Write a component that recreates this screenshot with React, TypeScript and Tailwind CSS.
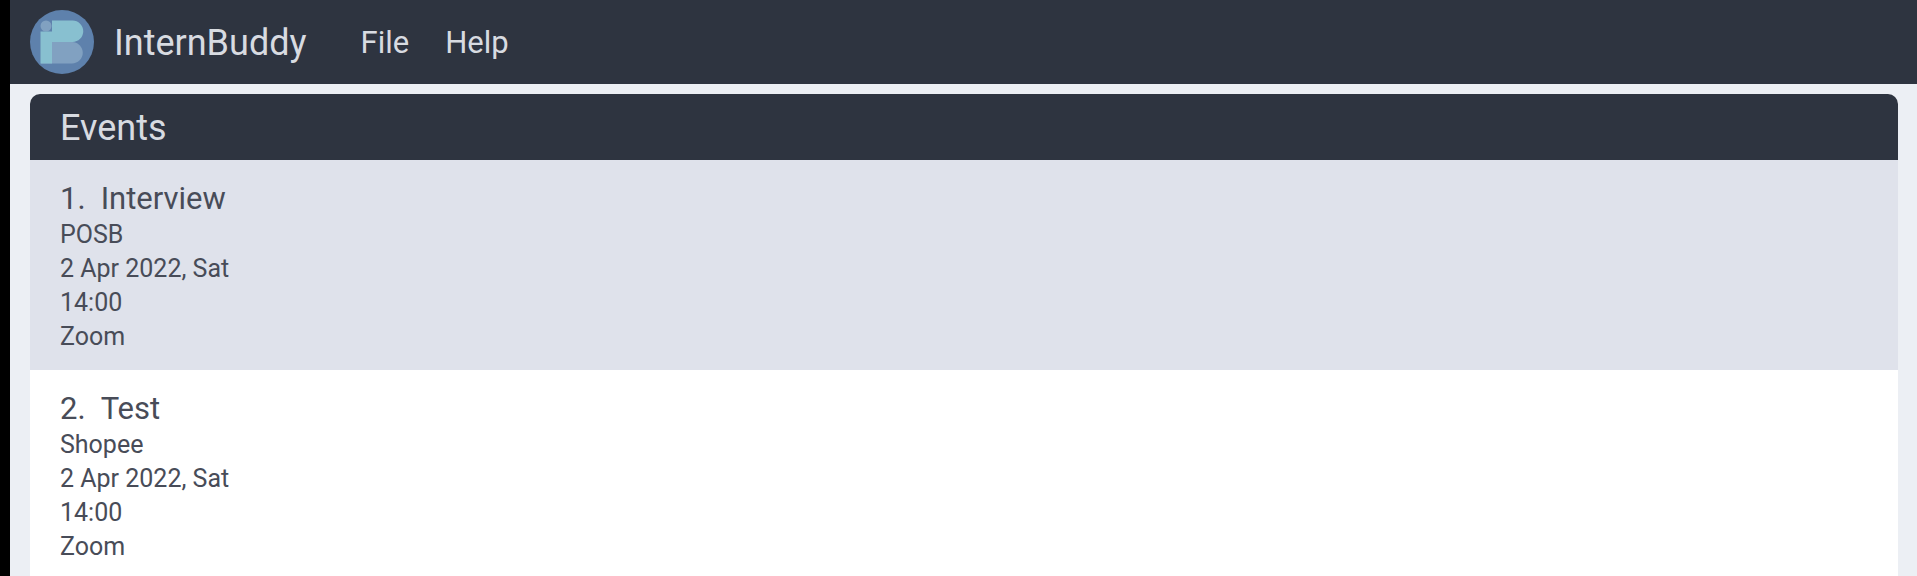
interface EventItem {
  title: string;
  company: string;
  date: string;
  time: string;
  place: string;
}

const events: EventItem[] = [
  { title: "Interview", company: "POSB", date: "2 Apr 2022, Sat", time: "14:00", place: "Zoom" },
  { title: "Test", company: "Shopee", date: "2 Apr 2022, Sat", time: "14:00", place: "Zoom" },
];

function Logo() {
  return (
    <svg viewBox="0 0 64 64" className="size-16 shrink-0" aria-hidden="true">
      <circle cx="32" cy="32" r="32" fill="#5e81ac" />
      <path d="M11 32H42A10.75 10.75 0 0 1 42 53.5H11Z" fill="#81a1c1" />
      <circle cx="16" cy="16" r="5.5" fill="#81a1c1" />
      <path d="M22 10.5H42.5A10.75 10.75 0 0 1 42.5 32H22V53.5H10.5V21.5H22Z" fill="#88c0d0" />
    </svg>
  );
}

function EventRow({ event, index }: { event: EventItem; index: number }) {
  return (
    <li className="px-[30px] pt-[19px] pb-4 text-[25px]/[34px] odd:bg-[#dfe2eb] even:bg-white">
      <h3 className="flex gap-[15px] text-[31px]/[39px]">
        <span>{index}.</span>
        <span>{event.title}</span>
      </h3>
      <p>{event.company}</p>
      <p>{event.date}</p>
      <p>{event.time}</p>
      <p>{event.place}</p>
    </li>
  );
}

export default function App() {
  return (
    <div className="flex h-screen flex-col overflow-hidden border-l-[10px] border-black bg-[#eceff4] font-['Roboto',sans-serif] text-[#484c58]">
      <header className="flex shrink-0 items-center bg-[#2e3440] px-5 py-[10px] text-[#d8dbe1]">
        <Logo />
        <h1 className="ml-5 pt-0.5 text-[36px]/[48px]">InternBuddy</h1>
        <nav className="ml-[54px] flex gap-9 pt-0.5 text-[31px]/[40px]">
          <button type="button">File</button>
          <button type="button">Help</button>
        </nav>
      </header>
      <main className="min-h-0 flex-1 pt-[10px] pr-[19px] pl-5">
        <section className="h-full overflow-hidden rounded-t-[10px] bg-white">
          <h2 className="bg-[#2e3440] px-[30px] pt-0.5 text-[36px]/[64px] text-[#d8dbe1]">Events</h2>
          <ol>
            {events.map((event, i) => (
              <EventRow key={event.title} event={event} index={i + 1} />
            ))}
          </ol>
        </section>
      </main>
    </div>
  );
}
